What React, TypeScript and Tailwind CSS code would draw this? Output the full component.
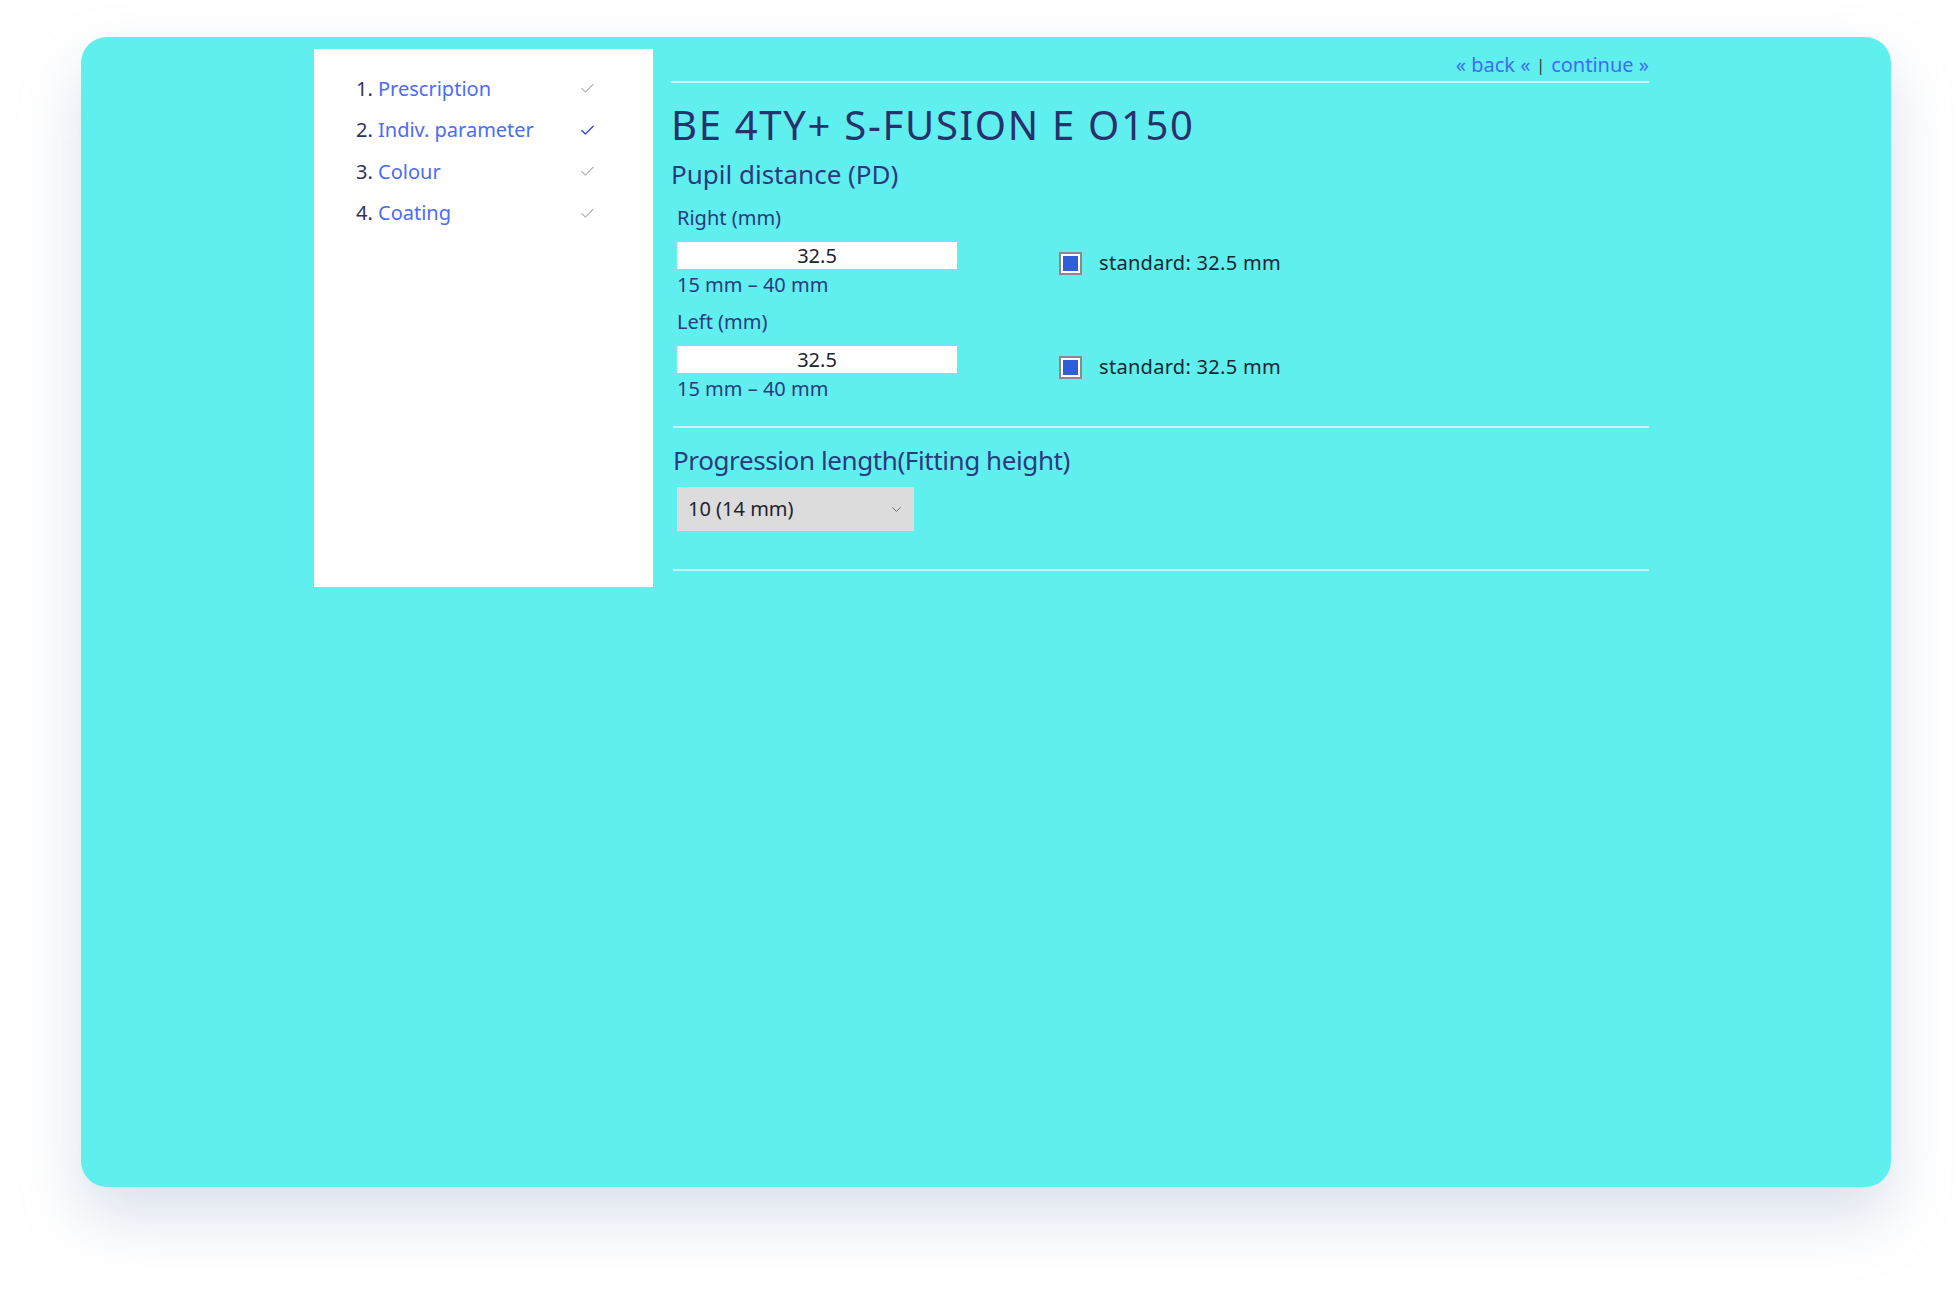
import React from 'react';
import { Check, ChevronDown } from 'lucide-react';

const steps = [
    { no: '1.', label: 'Prescription', active: false },
    { no: '2.', label: 'Indiv. parameter', active: true },
    { no: '3.', label: 'Colour', active: false },
    { no: '4.', label: 'Coating', active: false },
];

const PdRow: React.FC<{ label: string; value: string }> = ({ label, value }) => (
    <div className="flex items-start">
        <div className="w-[280px] ml-[6px]">
            <div className="text-[20px] leading-[26px] text-[#2b3a7c]">{label}</div>
            <div className="mt-[11px] h-[27px] bg-white flex items-center justify-center text-[20px] text-[#1e2430]">
                {value}
            </div>
            <div className="text-[20px] leading-[24px] mt-[4px] text-[#2b3a7c]">15 mm – 40 mm</div>
        </div>
        <label className="flex items-center ml-[102px] mt-[43px]">
            <span className="w-[23px] h-[23px] border-2 border-[#8a8a8a] bg-white p-[2px] flex">
                <span className="flex-1 bg-[#2f5fd8]" />
            </span>
            <span className="ml-[17px] text-[20px] tracking-[0.3px] text-[#14282e]">standard: 32.5 mm</span>
        </label>
    </div>
);

export default function App() {
    return (
        <div className="min-h-[1300px] bg-white pt-[37px] pl-[81px]" style={{ fontFamily: '"Noto Sans", sans-serif' }}>
            <div className="w-[1810px] h-[1150px] rounded-[26px] bg-[#60efef] shadow-[0_30px_60px_rgba(150,170,200,0.35)] pt-[12px] pl-[233px] flex items-start">
                {/* steps sidebar */}
                <div className="w-[339px] h-[538px] bg-white pl-[42px] pr-[57px] pt-[19px]">
                    {steps.map((step) => (
                        <div key={step.no} className="flex items-center justify-between h-[41.5px] text-[20px]">
                            <div>
                                <span className="text-[#2f3163]">{step.no}</span>{' '}
                                <span className="text-[#4a6cf7]">{step.label}</span>
                            </div>
                            <Check
                                className={step.active ? 'text-[#3a55d8]' : 'text-[#b4b4b4]'}
                                size={17}
                                strokeWidth={step.active ? 2.2 : 1.6}
                            />
                        </div>
                    ))}
                </div>

                {/* main column */}
                <div className="ml-[18px] w-[978px]">
                    <div className="flex justify-end items-center border-b-2 border-[#d6f7f7] pt-[4px] pb-[4px] text-[20px] leading-[24px]">
                        <a className="text-[#3c6ef0]">« back «</a>
                        <span className="mx-[6px] text-[#333] text-[16px]">|</span>
                        <a className="text-[#3c6ef0]">continue »</a>
                    </div>

                    <h1 className="mt-[18px] text-[40px] leading-[48px] tracking-[1.7px] text-[#29306b]">BE 4TY+ S-FUSION E O150</h1>
                    <h2 className="mt-[9px] text-[26px] leading-[32px] text-[#2b3a7c]">Pupil distance (PD)</h2>

                    <div className="mt-[15px] flex flex-col gap-[12px]">
                        <PdRow label="Right (mm)" value="32.5" />
                        <PdRow label="Left (mm)" value="32.5" />
                    </div>

                    <div className="mt-[25px] ml-[2px] w-[976px] border-t-2 border-[#c9f4f4]" />

                    <h2 className="mt-[16px] ml-[2px] text-[26px] leading-[32px] tracking-[-0.4px] text-[#2b3a7c]">
                        Progression length(Fitting height)
                    </h2>
                    <div className="mt-[11px] ml-[6px] w-[237px] h-[44px] bg-[#dcdcdc] flex items-center justify-between pl-[11px] pr-[10px] text-[20px] text-[#1e2430]">
                        <span>10 (14 mm)</span>
                        <ChevronDown size={15} className="text-[#666]" strokeWidth={1.5} />
                    </div>

                    <div className="mt-[38px] ml-[2px] w-[976px] border-t-2 border-[#c9f4f4]" />
                </div>
            </div>
        </div>
    );
}
